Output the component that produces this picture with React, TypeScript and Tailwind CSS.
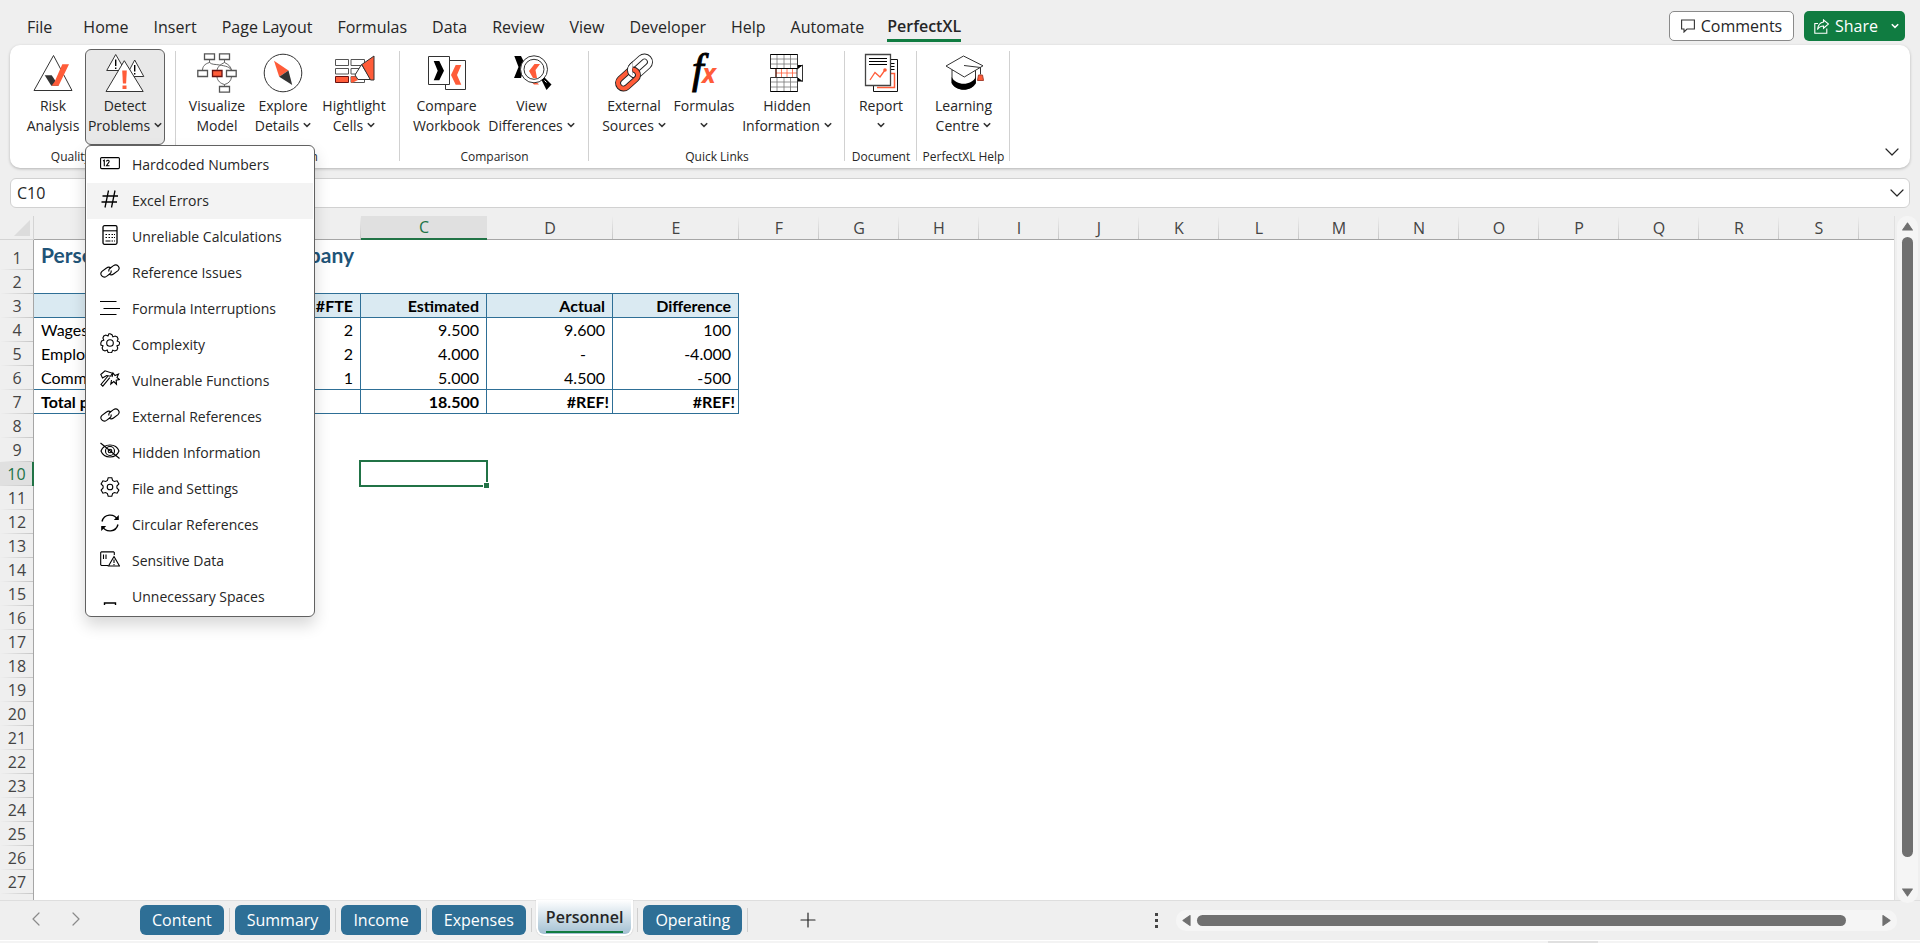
import type { ReactNode } from "react";
import { ChevronDown, ChevronLeft, ChevronRight, Plus } from "lucide-react";
import { cx } from "class-variance-authority";

const INK = "#333333";
const RED = "#ff5c39";

const tabs = ["Home", "Insert", "Page Layout", "Formulas", "Data", "Review", "View", "Developer", "Help", "Automate"];

/* ---------- Ribbon icons (40 x 40) ---------- */

function Icon({ children }: { children: ReactNode }) {
  return (
    <svg viewBox="0 0 40 40" className="w-10 h-10 shrink-0 overflow-visible" fill="none" stroke={INK} strokeWidth="1" aria-hidden="true">
      {children}
    </svg>
  );
}

const RiskIcon = () => (
  <Icon>
    <path d="M20.5 2.5 39 37.5H1z" fill="#fff" />
    <path d="M11.7 22.2h7l7 10.6h-7.4z" fill={INK} stroke="none" />
    <path d="M29.3 11.3H36L25.6 32.8h-7l3-4z" fill={RED} stroke="none" />
  </Icon>
);

const DetectIcon = () => (
  <Icon>
    <path d="M10.7 1.5 20 17.5H1.7z" fill="#fff" />
    <path d="M10.7 6.5v6.5M10.7 14.5v1.6" stroke="#000" strokeWidth="1.4" />
    <path d="M29.7 7 38.8 23.5H21z" fill="#fff" />
    <path d="M29.7 12v6.5M29.7 20v1.6" stroke="#000" strokeWidth="1.4" />
    <path d="M19.3 7.7 38.2 38.5H1z" fill="#fff" />
    <path d="M17.2 17.5h4.6l-.7 13h-3.2z" fill={RED} stroke="none" />
    <path d="M17.5 32.5h4V36h-4z" fill={RED} stroke="none" />
  </Icon>
);

const VisualizeIcon = () => (
  <Icon>
    <path
      d="M12.5 6.500v3c-5 1.500-7 4-7 8M12.500 9.500c3 2.500 5 1.500 10 2.500 6 1 11 2 12 5.500M27.500 6.500v3c-4 2-7 4-7.500 8M27.500 9.500c4 2 6.500 4 7 8M20 24c.5 4 3.500 6.500 7.500 7.500v2M34.500 24c-.5 4-3 6.500-7 7.500"
      strokeWidth="0.9"
      stroke="#555"
    />
    <g fill="#fff" stroke="#555" strokeWidth="1.3">
      <path d="M7.5.8h10v5.7h-10zM22.500.8h10v5.700h-10zM.8 17.500h9.700v6H.8zM29.500 17.500h9.700v6h-9.700zM22.500 33.500h10v5.700h-10z" />
      <path d="M15.500 17.500H25v6h-9.500z" fill={RED} stroke="#611" />
    </g>
  </Icon>
);

const ExploreIcon = () => (
  <Icon>
    <circle cx="20" cy="20" r="18.8" />
    <path d="M11 7.7 25.5 17.5 16.2 23.8z" fill={RED} stroke="none" />
    <path d="M25.5 17.5 29.2 32 16.2 23.8z" fill={INK} stroke="none" />
  </Icon>
);

const HighlightIcon = () => (
  <Icon>
    <path d="M1.5 6.5h13v6h-13zM17 6.5h13.5v6H17zM1.5 15.5h13V21h-13zM17 15.5h13.5V21H17zM17 23.500h13.500v6H17z" stroke="#555" />
    <path d="M1.5 23.5h13v6h-13z" fill={RED} stroke="#611" />
    <path d="M17 23.5h5l2 3.5-5 2.500h-2z" fill={RED} stroke="none" />
    <path d="M27.5 11.5 37 26.500H24l-3-4.500z" fill="#fff" />
    <path d="M40 3 27.8 11.5 36.500 27H40z" fill={RED} />
  </Icon>
);

const CompareIcon = () => (
  <Icon>
    <path d="M18.5 7.5h20v29h-20z" fill="#fff" />
    <path d="M1.5 3.5h21v28h-21z" fill="#fff" />
    <path d="M6.7 8h5.6L17 17.700l-4.700 9.600H6.700l4-9.600z" fill="#000" stroke="none" />
    <path d="M28.700 12h5.600L30 22l4.300 9.700h-5.600L24 22z" fill={RED} stroke="none" />
  </Icon>
);

const ViewDiffIcon = () => (
  <Icon>
    <path d="M2.3 3H9l4 8-4 14H2l4.500-11z" fill="#000" stroke="none" />
    <path d="M20 29.500h5l2 2h-5z" fill={RED} stroke="none" />
    <circle cx="22" cy="16.3" r="13.5" fill="#fff" />
    <circle cx="22" cy="16.3" r="10" />
    <path d="M22.500 11H28l-4.500 6 1.500 8h-4l-4-7z" fill={RED} stroke="none" />
    <path d="m29.500 27 3-2.500 7 7-5 5.500z" fill="#000" stroke="none" />
    <path d="m32.500 27.500 2 2" stroke="#fff" />
  </Icon>
);

const whiteLink = (
  <g transform="rotate(-42 26 13)">
    <rect x="14.5" y="7.500" width="23" height="11" rx="5.500" stroke="#222" strokeWidth="6" />
    <rect x="14.500" y="7.500" width="23" height="11" rx="5.500" stroke="#fff" strokeWidth="4.200" />
  </g>
);

const LinkIcon = () => (
  <Icon>
    <clipPath id="link-over">
      <path d="M6 4h12.500v18H6z" />
    </clipPath>
    {whiteLink}
    <g transform="rotate(-42 14 26)">
      <rect x="2.500" y="20.500" width="23" height="11" rx="5.500" stroke="#222" strokeWidth="6" />
      <rect x="2.500" y="20.500" width="23" height="11" rx="5.500" stroke={RED} strokeWidth="4.200" />
    </g>
    <g clipPath="url(#link-over)">{whiteLink}</g>
  </Icon>
);

const FxIcon = () => (
  <Icon>
    <text x="8" y="30" fontFamily="Liberation Serif, serif" fontSize="42" fontStyle="italic" fill="#000" stroke="#000" strokeWidth="1">
      f
    </text>
    <text x="18" y="30" fontFamily="Open Sans, sans-serif" fontSize="26" fontStyle="italic" fontWeight="bold" fill={RED} stroke="none">
      x
    </text>
  </Icon>
);

const HiddenIcon = () => (
  <Icon>
    <path d="M9 15.5h22v9H9z" fill="#fff" stroke={RED} />
    <path d="M9 20h22M14.5 15.5v9M20 15.5v9M25.5 15.5v9" stroke={RED} strokeWidth="0.8" />
    <path d="M9 15.5v9" stroke="#000" />
    <path d="M30 16l5.5-4v16.500l-5.500-4z" fill="#fff" />
    <path d="M30 12h5.500L30 16.500zM30 24l5.500 4.500H30z" fill="#000" stroke="none" />
    <path
      d="M3.500 6h27M3.500 11h27M10 1.500v14M17 1.500v14M23.500 1.500v14M3.500 29h27M3.500 34h27M10 24.500v14M17 24.500v14M23.500 24.500v14"
      stroke="#777"
      strokeWidth="0.8"
    />
    <path d="M3.500 1.500h27v14h-27zM3.500 24.500h27v14h-27z" />
    <path d="M3.500 1.500h27M3.500 15.500h27M3.500 38.500h27" stroke="#000" />
  </Icon>
);

const ReportIcon = () => (
  <Icon>
    <path d="M12.5 6.500h24v32h-24z" fill="#fff" stroke="#111" />
    <path d="M29 10.500h4.500M29 13.500h4.500M29 16.500h4.500" stroke="#000" />
    <path d="M30 20.500h3.500v14H16" stroke={RED} strokeWidth="1.500" />
    <path d="M4.500 1.500h25v31h-25z" fill="#fff" stroke="#444" strokeWidth="1.300" />
    <path d="M8 5.500h18M8 8.500h18M8 11.500h18" stroke="#000" strokeWidth="1.200" />
    <path d="m9 27 5-7.500 5 4.500 5-7" stroke={RED} strokeWidth="1.300" />
    <circle cx="24" cy="17" r="1.800" fill={RED} stroke="none" />
  </Icon>
);

const LearningIcon = () => (
  <Icon>
    <path d="M8 17v13c4 8 20 8 23.5 0V17z" fill="#fff" />
    <path d="M7.700 24c4 9 20 9 24 0v6c-4 9-20 9-24 0z" fill="#000" stroke="none" />
    <path d="M19.500 3 39 12.800 20.300 24 2 13z" fill="#fff" />
    <path d="M20 12.500 36.500 14.500v7" />
    <path d="M34.500 22h4l1 5.500h-6z" fill={RED} stroke="#a43" />
  </Icon>
);

/* ---------- Drop-down menu icons (20 x 20) ---------- */

const gear =
  "m10 .8 2 .9.9 2.200 2.200-.9 2.100.9.900 2.100-.9 2.100 2.100 1 .4 1-.8 2-2 .8.9 2.100-.9 2.100-2.100.9-2.100-.9-.9 2.100-1.800.7-2-.7-.8-2.200-2.200.9-2-.9-.9-2 .9-2.200-2.100-.8L.8 10l.8-2 2.200-.8L2.900 5l.9-2 2-.9 2.200.9.9-2.200z";

const chain = (
  <>
    <path d="M11 9.500a3 3 0 0 1-1 3.300l-3.500 2.600c-3.500 2.300-7.500-2-4.500-5L6.500 7c1.500-1.200 3.300-1 4.500.2" />
    <path d="M9 10.500a3 3 0 0 1 1-3.300l3.500-2.600c3.500-2.300 7.500 2 4.500 5L13.500 13c-1.500 1.200-3.300 1-4.500-.2" />
  </>
);

const problems: { label: string; icon: ReactNode }[] = [
  {
    label: "Hardcoded Numbers",
    icon: (
      <>
        <rect x=".6" y="4.600" width="18.800" height="11" rx="1" />
        <path d="m3 8 1.300-.8v6M6.500 8.500c.3-2 3.300-1.500 2.500.5L6.500 12.700h3" />
      </>
    ),
  },
  { label: "Excel Errors", icon: <path d="M8.500 1.500 5 18.500M15 1.500l-3.500 17M2.500 7H18M1.500 13H17" strokeWidth="1.300" /> },
  {
    label: "Unreliable Calculations",
    icon: (
      <>
        <rect x="3" y=".7" width="14" height="18.600" rx="1.500" strokeWidth="1.300" />
        <path d="M3 5.800h14" />
        <path d="M5.500 9.500h1.500M8.500 9.500H10M11.500 9.500H13M14 9.500h1M5.500 12.500h1.500M8.500 12.500H10M11.500 12.500H13M14 12.500h1M5.500 16h5M11.500 16H13M14 16h1" />
      </>
    ),
  },
  { label: "Reference Issues", icon: chain },
  { label: "Formula Interruptions", icon: <path d="M0 4.500h16.500M3.500 11.500H20M0 17.500h16.500" /> },
  {
    label: "Complexity",
    icon: (
      <>
        <path d={gear} />
        <circle cx="10" cy="10" r="3.300" />
      </>
    ),
  },
  {
    label: "Vulnerable Functions",
    icon: (
      <>
        <path d="M.8 5.500 5 1.800l7.500 2.400-2 3-3.800-.7L2.500 9z" />
        <path d="M8 7 1 15.500l1.800 1.700 7-8.500" />
        <path d="m12 8 1-4 2 2.500 3.500-1.500-1.500 3.500 2.500 2-3.300.7.300 4-2.700-2.700-3 2.500.7-4" />
      </>
    ),
  },
  { label: "External References", icon: chain },
  {
    label: "Hidden Information",
    icon: (
      <>
        <path d="M1 10c3-8 15-8 18 0-3 8-15 8-18 0z" />
        <circle cx="10" cy="10" r="4.500" />
        <circle cx="10" cy="10" r="1.800" />
        <path d="m.5 2 19 15.500" />
      </>
    ),
  },
  {
    label: "File and Settings",
    icon: (
      <>
        <path d="m8.200.8h3.600l.8 2.700 1.700 1 2.800-.7 1.800 3.200-2 2v2l2 2-1.800 3.200-2.800-.7-1.700 1-.8 2.700H8.200l-.8-2.700-1.700-1-2.800.7L1.100 13l2-2V9l-2-2 1.800-3.200 2.800.7 1.700-1z" />
        <circle cx="10" cy="10" r="2.800" />
      </>
    ),
  },
  {
    label: "Circular References",
    icon: (
      <>
        <path d="M2 8.500C4 .8 14 0 17.500 6.500M18 11.500C16 19.200 6 20 2.500 13.500" strokeWidth="1.400" />
        <path d="M18.800 2v5h-5zM1.200 18v-5h5z" fill="#000" stroke="none" />
      </>
    ),
  },
  {
    label: "Sensitive Data",
    icon: (
      <>
        <path d="M8 16.500H1.500l-.8-.7V3.600l.8-.7h12l.8.7V6" />
        <path d="M3.500 5.500v4.500M6 5.500v4.500" />
        <path d="M14 7.500 19.500 17H8.500z" />
        <path d="M14 10.500v3.500M14 15v1.200" />
      </>
    ),
  },
  { label: "Unnecessary Spaces", icon: <path d="M4.500 20v-2h11v2" strokeWidth="1.400" /> },
];

/* ---------- Ribbon ---------- */

const Caret = () => (
  <svg viewBox="0 0 8 8" className="w-2 h-2 inline-block ml-1 mb-1" fill="none" stroke={INK} strokeWidth="1.5" aria-hidden="true">
    <path d="m.8 2.200 3.200 3.200 3.200-3.200" />
  </svg>
);

type RibbonButtonProps = { icon: ReactNode; top: string; bottom?: string; caret?: boolean; width: string; active?: boolean };

function RibbonButton({ icon, top, bottom, caret, width, active }: RibbonButtonProps) {
  return (
    <button
      type="button"
      aria-expanded={active}
      className={cx(
        "h-24 pt-[3px] flex flex-col items-center border rounded-md text-sm leading-5 whitespace-nowrap",
        width,
        active ? "bg-[#e8e8e8] border-[#616161]" : "border-transparent"
      )}
    >
      {icon}
      <span className="mt-[3px]">{top}</span>
      <span className={bottom ? undefined : "-ml-1"}>
        {bottom}
        {caret && <Caret />}
      </span>
    </button>
  );
}

function Group({ label, width, children }: { label: string; width: string; children: ReactNode }) {
  return (
    <section aria-label={label} className={cx("relative h-full flex flex-col items-center pt-1 shrink-0", width)}>
      <div className="flex justify-center">{children}</div>
      <div className="text-xs leading-5 whitespace-nowrap mt-[2px]">{label}</div>
      <span className="absolute right-0 top-[6px] bottom-[7px] w-px bg-[#d1d1d1]" />
    </section>
  );
}

function ProblemsMenu() {
  return (
    <ul className="absolute left-0 top-24 z-20 w-[230px] p-[1px] bg-white border border-[#616161] rounded-md shadow-[0_8px_16px_rgba(0,0,0,0.16)]">
      {problems.map(({ label, icon }) => (
        <li key={label}>
          <button
            type="button"
            className={cx(
              "w-full h-9 pl-[13px] flex items-start gap-3 text-sm leading-9 text-left whitespace-nowrap",
              label === "Excel Errors" && "bg-[#f3f3f3]"
            )}
          >
            <svg viewBox="0 0 20 20" className="w-5 h-5 mt-[6px] shrink-0" fill="none" stroke="#000" strokeWidth="1.1" aria-hidden="true">
              {icon}
            </svg>
            {label}
          </button>
        </li>
      ))}
    </ul>
  );
}

function Ribbon() {
  return (
    <div className="relative mx-[10px] h-[123px] bg-white rounded-[10px] shadow-[0_1px_3px_rgba(0,0,0,0.25)] flex">
      <Group label="Quality Control" width="w-[166px]">
        <RibbonButton icon={<RiskIcon />} top="Risk" bottom="Analysis" width="w-[64px]" />
        <div className="relative">
          <RibbonButton icon={<DetectIcon />} top="Detect" bottom="Problems" caret width="w-[80px]" active />
          <ProblemsMenu />
        </div>
      </Group>
      <Group label="Navigation" width="w-[224px]">
        <RibbonButton icon={<VisualizeIcon />} top="Visualize" bottom="Model" width="w-[64px]" />
        <RibbonButton icon={<ExploreIcon />} top="Explore" bottom="Details" caret width="w-[68px]" />
        <RibbonButton icon={<HighlightIcon />} top="Hightlight" bottom="Cells" caret width="w-[74px]" />
      </Group>
      <Group label="Comparison" width="w-[189px]">
        <RibbonButton icon={<CompareIcon />} top="Compare" bottom="Workbook" width="w-[74px]" />
        <RibbonButton icon={<ViewDiffIcon />} top="View" bottom="Differences" caret width="w-[96px]" />
      </Group>
      <Group label="Quick Links" width="w-[256px]">
        <RibbonButton icon={<LinkIcon />} top="External" bottom="Sources" caret width="w-[72px]" />
        <RibbonButton icon={<FxIcon />} top="Formulas" caret width="w-[68px]" />
        <RibbonButton icon={<HiddenIcon />} top="Hidden" bottom="Information" caret width="w-[98px]" />
      </Group>
      <Group label="Document" width="w-[72px]">
        <RibbonButton icon={<ReportIcon />} top="Report" caret width="w-[60px]" />
      </Group>
      <Group label="PerfectXL Help" width="w-[93px]">
        <RibbonButton icon={<LearningIcon />} top="Learning" bottom="Centre" caret width="w-[72px]" />
      </Group>
      <button type="button" aria-label="Collapse ribbon" className="absolute right-[6px] bottom-1">
        <ChevronDown className="w-6 h-6" strokeWidth={1.2} />
      </button>
    </div>
  );
}

/* ---------- Sheet ---------- */

const columns = "ABCDEFGHIJKLMNOPQRS".split("");
const rows = Array.from({ length: 27 }, (_, i) => i + 1);

const cells: Record<string, string> = {
  A1: "Personnel costs Sample Company",
  B3: "#FTE", C3: "Estimated", D3: "Actual", E3: "Difference",
  A4: "Wages", B4: "2", C4: "9.500", D4: "9.600", E4: "100",
  A5: "Employer costs", B5: "2", C5: "4.000", D5: "-", E5: "-4.000",
  A6: "Commissions", B6: "1", C6: "5.000", D6: "4.500", E6: "-500",
  A7: "Total personnel", C7: "18.500", D7: "#REF!", E7: "#REF!",
};

function Cell({ col, row }: { col: string; row: number }) {
  const text = cells[col + row];
  const inBlock = row >= 3 && row <= 7 && col <= "E";
  return (
    <td
      className={cx(
        "relative p-0 whitespace-nowrap",
        row === 1 && "text-[21px] leading-6 font-bold text-[#1f5478]",
        (row === 3 || row === 7) && "font-bold",
        row === 3 && inBlock && "bg-[#daeaf2]",
        inBlock && "border-r border-[#2e6f96]",
        col <= "E" && [2, 3, 6, 7].includes(row) && "border-b border-[#2e6f96]",
        col === "A" ? "pl-[7px] text-left" : "text-right",
        text === "-" ? "pr-[26px]" : text === "#REF!" ? "pr-[3px]" : "pr-[7px]"
      )}
    >
      {text}
      {col === "C" && row === 10 && (
        <span className="absolute -left-[2px] -top-[2px] -right-[1px] -bottom-[1px] border-2 border-[#217346]">
          <span className="absolute -right-[4px] -bottom-[4px] w-[7px] h-[7px] bg-[#217346] border border-white" />
        </span>
      )}
    </td>
  );
}

function Sheet() {
  return (
    <div className="flex-1 min-w-0 flex flex-col overflow-hidden bg-white border-r border-[#e0e0e0]">
      <table className="w-full table-fixed border-separate border-spacing-0 font-['Lato',sans-serif] text-base leading-5 text-black">
        <colgroup>
          <col className="w-[34px]" />
          <col className="w-[205px]" />
          <col className="w-[122px]" />
          <col className="w-[126px]" />
          <col className="w-[126px]" />
          <col className="w-[126px]" />
          {columns.slice(5).map((c) => (
            <col key={c} className="w-20" />
          ))}
          <col />
        </colgroup>
        <thead>
          <tr className="h-6 bg-[#efefef] font-['Open_Sans',sans-serif] text-[#444]">
            <td className="p-0 border-b border-r border-[#d4d4d4]">
              <svg viewBox="0 0 16 16" className="w-4 h-4 ml-auto mr-[3px]" aria-hidden="true">
                <path d="M16 0v16H0z" fill="#dcdcdc" />
              </svg>
            </td>
            {columns.map((c) => (
              <th
                key={c}
                scope="col"
                className={cx(
                  "p-0 font-normal",
                  c === "C"
                    ? "bg-[#e0e0e0] text-[#217346] border-b-2 border-[#217346]"
                    : "border-b border-[#a6a6a6] bg-[linear-gradient(to_bottom,transparent,#c6c6c6)] bg-[length:1px_100%] bg-right bg-no-repeat"
                )}
              >
                {c}
              </th>
            ))}
            <td className="border-b border-[#a6a6a6]" />
          </tr>
        </thead>
        <tbody>
          {rows.map((r) => (
            <tr key={r} className={r === 1 ? "h-[30px]" : "h-6"}>
              <th
                scope="row"
                className={cx(
                  "p-0 align-bottom font-['Open_Sans',sans-serif] font-normal",
                  r === 10
                    ? "bg-[#e0e0e0] text-[#217346] border-r-2 border-[#217346]"
                    : "bg-[#efefef] text-[#444] border-r border-[#a6a6a6]"
                )}
              >
                <div className="pl-px pt-px leading-[23px] bg-[linear-gradient(to_right,transparent,#c6c6c6)] bg-[length:100%_1px] bg-bottom bg-no-repeat">
                  {r}
                </div>
              </th>
              {columns.map((c) => (
                <Cell key={c} col={c} row={r} />
              ))}
              <td />
            </tr>
          ))}
        </tbody>
      </table>
      <div className="flex-1 w-[34px] bg-[#efefef] border-r border-[#a6a6a6]" />
    </div>
  );
}

function Arrow({ label, d, size }: { label: string; d: string; size: string }) {
  return (
    <button type="button" aria-label={label} className="shrink-0">
      <svg viewBox="0 0 10 10" preserveAspectRatio="none" className={size} fill="#707070" stroke="#707070" strokeLinejoin="round">
        <path d={d} />
      </svg>
    </button>
  );
}

function VerticalScroll() {
  return (
    <div className="w-[21px] mx-[2px] -mb-[3px] py-[6px] z-10 flex flex-col items-center bg-[#f5f5f5] rounded-[10px]">
      <Arrow label="Scroll up" d="M5 1 9.500 9h-9z" size="w-[11px] h-[9px]" />
      <div className="flex-1 w-[11px] mt-[6px] mb-[31px] bg-[#707070] rounded-md" />
      <Arrow label="Scroll down" d="M.5 1h9L5 9z" size="w-[11px] h-[9px]" />
    </div>
  );
}

/* ---------- Footer ---------- */

const sheetTabs = ["Content", "Summary", "Income", "Expenses", "Personnel", "Operating"];

function SheetTab({ name }: { name: string }) {
  if (name === "Personnel") {
    return (
      <div className="h-9 -mt-px mx-1 self-start px-[2px] pb-[2px] bg-white rounded-b-lg shadow-[0_0_1px_rgba(0,0,0,0.3)]">
        <button type="button" aria-current="page" className="h-full px-2 rounded-b-md bg-linear-to-b from-white to-[#a3c0d2]">
          <span className="block h-[31px] leading-[31px] font-semibold border-b-2 border-[#107c41]">{name}</span>
        </button>
      </div>
    );
  }
  return (
    <button type="button" className="h-[30px] mx-[5px] px-3 rounded-md bg-[#2e6f96] text-white leading-[30px]">
      {name}
    </button>
  );
}

function Footer() {
  return (
    <footer className="h-[43px] shrink-0">
      <div className="h-10 pb-px border-t border-[#dedede] flex items-center">
        <div className="w-[135px] pl-6 pb-[2px] flex gap-4 text-[#8a8a8a] shrink-0">
          <button type="button" aria-label="Previous sheet"><ChevronLeft className="w-6 h-6" strokeWidth={1.2} /></button>
          <button type="button" aria-label="Next sheet"><ChevronRight className="w-6 h-6" strokeWidth={1.2} /></button>
        </div>
        <nav className="h-full flex items-center text-base">
          {sheetTabs.map((name) => (
            <div key={name} className="h-full flex items-center">
              <SheetTab name={name} />
              <span className="w-px h-6 bg-[#cfcfcf]" />
            </div>
          ))}
        </nav>
        <button type="button" aria-label="New sheet" className="ml-12">
          <Plus className="w-6 h-6" strokeWidth={1.2} />
        </button>
        <div className="ml-auto w-[742px] mr-[23px] flex items-center">
          <div className="flex flex-col gap-[3px] mr-[18px]">
            <span className="w-[3px] h-[3px] bg-[#444]" />
            <span className="w-[3px] h-[3px] bg-[#444]" />
            <span className="w-[3px] h-[3px] bg-[#444]" />
          </div>
          <div className="flex-1 h-[21px] px-[6px] flex items-center bg-[#f5f5f5] rounded-[10px]">
            <Arrow label="Scroll left" d="M9 .5v9L1 5z" size="w-[9px] h-[11px]" />
            <div className="flex-1 h-[11px] ml-[6px] mr-9 bg-[#707070] rounded-md" />
            <Arrow label="Scroll right" d="M1 .5v9L9 5z" size="w-[9px] h-[11px]" />
          </div>
        </div>
      </div>
      <div className="h-[3px] border-t border-white bg-[#f4f4f4] flex justify-end">
        <span className="w-[50px] mr-[322px] bg-[#e0e0e0]" />
      </div>
    </footer>
  );
}

export default function App() {
  return (
    <div className="h-screen flex flex-col overflow-hidden bg-[#efefef] font-['Open_Sans',sans-serif] text-[#262626]">
      <header className="h-[45px] shrink-0 flex items-start text-base">
        <nav className="flex gap-px pt-3 pl-[15px] leading-7">
          <button type="button" className="px-3 mr-[6px] whitespace-nowrap">File</button>
          {tabs.map((tab) => (
            <button key={tab} type="button" className="px-3 whitespace-nowrap">
              {tab}
            </button>
          ))}
          <button type="button" aria-current="page" className="px-[10px] font-semibold">
            <span className="block h-[30px] border-b-[3px] border-[#107c41]">PerfectXL</span>
          </button>
        </nav>
        <div className="ml-auto mr-[15px] mt-[11px] flex gap-[10px] leading-7">
          <button type="button" className="h-[30px] w-[125px] flex items-center justify-center gap-[6px] bg-white border border-[#8a8a8a] rounded-[5px]">
            <svg viewBox="0 0 14 14" className="w-[14px] h-[14px]" fill="none" stroke={INK} strokeWidth="1.1" aria-hidden="true">
              <path d="M.6 1h12.800v9H6l-3 3v-3H.6z" />
            </svg>
            Comments
          </button>
          <button type="button" className="h-[30px] w-[101px] pl-[10px] pr-[6px] flex items-center gap-[6px] bg-[#107c41] text-white rounded-[5px]">
            <svg viewBox="0 0 15 15" className="w-[15px] h-[15px]" fill="none" stroke="#fff" strokeWidth="1.1" aria-hidden="true">
              <path d="M4 4.500H.8v9.700h12V9.500M9.500.8l5 4.200-5 4.200V7C6.500 7 5 8 3.500 10.500 4 6 6 3.500 9.500 3z" />
            </svg>
            Share
            <svg viewBox="0 0 8 8" className="w-2 h-2 ml-auto" fill="none" stroke="#fff" strokeWidth="1.5" aria-hidden="true">
              <path d="m.8 2.200 3.200 3.200 3.200-3.200" />
            </svg>
          </button>
        </div>
      </header>

      <Ribbon />

      <div className="mx-[10px] mt-[10px] mb-2 h-[30px] shrink-0 flex items-center bg-white border border-[#d1d1d1] rounded-md">
        <input aria-label="Name box" defaultValue="C10" className="w-[120px] pl-[6px] text-base outline-none" />
        <input aria-label="Formula" className="flex-1 outline-none" />
        <button type="button" aria-label="Expand formula bar">
          <ChevronDown className="w-6 h-6" strokeWidth={1.2} />
        </button>
      </div>

      <main className="flex-1 min-h-0 flex">
        <Sheet />
        <VerticalScroll />
      </main>

      <Footer />
    </div>
  );
}
